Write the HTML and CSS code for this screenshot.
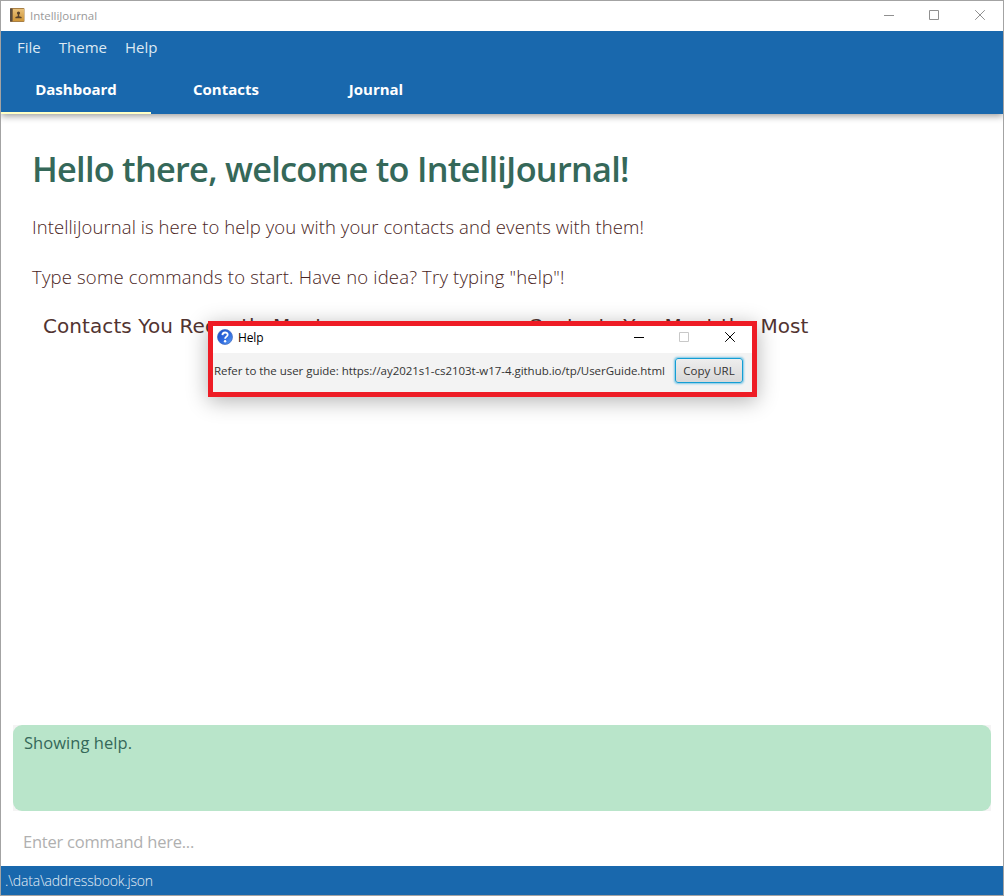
FILE: index.html
```html
<!DOCTYPE html>
<html lang="en">
<head>
<meta charset="utf-8">
<title>IntelliJournal</title>
<link rel="stylesheet" href="styles.css">
</head>
<body>
<div class="window">
  <header class="titlebar">
    <svg class="app-icon" width="15" height="15" viewBox="0 0 15 15">
      <defs><linearGradient id="book" x1="0" y1="0" x2="0" y2="1"><stop offset="0" stop-color="#e8c078"/><stop offset="1" stop-color="#cf9638"/></linearGradient></defs>
      <rect x="0" y="0" width="14.5" height="14" rx="1" fill="#a87f45"/>
      <rect x="0" y="0.5" width="2.4" height="13" fill="#5a4c3e"/>
      <rect x="3" y="1" width="11" height="12" fill="url(#book)"/>
      <circle cx="8.5" cy="5" r="1.6" fill="#56402a"/>
      <path d="M7.8 6h1.4v2.2l2.4.8v1.2H5.4V9l2.4-.8z" fill="#56402a"/>
    </svg>
    <span class="app-title">IntelliJournal</span>
    <div class="controls">
      <svg width="11" height="11" viewBox="0 0 11 11"><path d="M1 5.5h10"/></svg>
      <svg width="11" height="11" viewBox="0 0 11 11"><path d="M.5 .5h9v9h-9z"/></svg>
      <svg width="11" height="11" viewBox="0 0 11 11"><path d="M.2 .2l9.6 9.6M9.8 .2L.2 9.8"/></svg>
    </div>
  </header>
  <div class="topbar">
    <nav class="menu"><span>File</span><span>Theme</span><span>Help</span></nav>
    <nav class="tabs"><div class="tab active">Dashboard</div><div class="tab">Contacts</div><div class="tab">Journal</div></nav>
  </div>
  <main class="content">
    <h1>Hello there, welcome to IntelliJournal!</h1>
    <p class="intro">IntelliJournal is here to help you with your contacts and events with them!</p>
    <p class="hint">Type some commands to start. Have no idea? Try typing "help"!</p>
    <div class="columns"><h2>Contacts You Recently Meet</h2><h2>Contacts You Meet the Most</h2></div>
  </main>
  <div class="result-wrap"><div class="result">Showing help.</div></div>
  <div class="command">Enter command here...</div>
  <footer class="status">.\data\addressbook.json</footer>
</div>
<section class="dialog">
  <div class="dialog-title">
    <svg class="help-icon" width="16" height="16" viewBox="0 0 16 16">
      <defs><linearGradient id="ball" x1="0" y1="0" x2="1" y2="1"><stop offset="0" stop-color="#1c4fc4"/><stop offset=".55" stop-color="#2f6be0"/><stop offset="1" stop-color="#62a4f4"/></linearGradient></defs>
      <circle cx="8" cy="8" r="7.5" fill="url(#ball)" stroke="#3c66bd" stroke-width=".7"/>
      <path d="M5.4 6.1C5.5 2.7 10.7 2.7 10.7 5.8C10.7 7.7 8.1 7.6 8.1 9.8" fill="none" stroke="#fff" stroke-width="1.8"/>
      <circle cx="8.1" cy="12.3" r="1.2" fill="#fff"/>
    </svg>
    <span class="dialog-name">Help</span>
    <div class="dialog-controls">
      <svg width="11" height="11" viewBox="0 0 11 11"><path d="M1 5.5h10"/></svg>
      <svg class="disabled" width="11" height="11" viewBox="0 0 11 11"><path d="M.5 .5h9v9h-9z"/></svg>
      <svg width="11" height="11" viewBox="0 0 11 11"><path d="M.2 .2l9.6 9.6M9.8 .2L.2 9.8"/></svg>
    </div>
  </div>
  <div class="dialog-body"><span class="url">Refer to the user guide: https://ay2021s1-cs2103t-w17-4.github.io/tp/UserGuide.html</span><button class="copy">Copy URL</button></div>
</section>
</body>
</html>
```
FILE: styles.css
```css
* { box-sizing: border-box; }
body { margin: 0; width: 1004px; height: 896px; overflow: hidden; background: #fff; font-family: "Open Sans", "Noto Sans", sans-serif; }
.window { width: 1004px; height: 896px; border: 1px solid #a3a3a3; display: flex; flex-direction: column; }
.titlebar { height: 30px; flex: none; display: flex; align-items: center; padding: 0 17px 2px 9px; }
.app-icon { flex: none; margin-right: 5px; }
.app-title { font-size: 11.5px; letter-spacing: -.04px; color: #999; }
.controls { margin-left: auto; display: flex; gap: 35px; }
.controls path { fill: none; stroke: #909090; stroke-width: 1; }
.topbar { height: 83px; flex: none; background: #1968ad; box-shadow: 0 2px 7px rgba(0,0,0,.4); clip-path: inset(0 0 -14px 0); display: flex; flex-direction: column; }
.menu { height: 34px; display: flex; align-items: center; gap: 18px; padding: 0 0 2px 16px; font-size: 15px; color: #dde9f3; }
.tabs { height: 49px; display: flex; }
.tab { width: 150px; text-align: center; color: #fff; font-weight: 700; font-size: 15px; line-height: 49px; }
.tab.active { border-bottom: 2px solid #ffffc4; }
.content { flex: 1; padding: 0 31px; }
h1 { margin: 30px 0 0; font-size: 34.3px; letter-spacing: -.73px; line-height: 50px; font-weight: 600; color: #356859; white-space: nowrap; }
p { margin: 18px 0 0; font-size: 18.5px; line-height: 32px; font-weight: 300; color: #4a2523; white-space: nowrap; }
.intro { margin-top: 17px; letter-spacing: .07px; }
.hint { letter-spacing: .18px; }
.columns { display: grid; grid-template-columns: 485px 1fr; padding-left: 11px; margin-top: 17px; }
h2 { margin: 0; font: 400 20px/32px "DejaVu Sans", sans-serif; letter-spacing: .08px; color: #523431; white-space: nowrap; }
.result-wrap { margin: 0 12px; background: #f4f4f4; flex: none; }
.result { height: 86px; border-radius: 9px; background: #b9e5ca; color: #356859; padding: 6px 11px; font-size: 16.5px; letter-spacing: .05px; line-height: 24px; }
.command { height: 55px; flex: none; padding: 5px 22px 0; font-size: 16.5px; letter-spacing: -.23px; line-height: 52px; color: #b0b0b0; }
.status { height: 29px; flex: none; background: #1968ad; color: #e5eef6; padding-left: 4px; font-size: 14px; letter-spacing: -.18px; line-height: 30px; font-weight: 300; }
.dialog { position: absolute; left: 208px; top: 321px; width: 549px; height: 76px; border: 5px solid #ee1c25; background: #fff; box-shadow: 0 4px 20px rgba(0,0,0,.3); }
.dialog-title { height: 27px; display: flex; align-items: center; padding: 0 16px 5px 4px; }
.help-icon { margin-top: 0; }
.dialog-name { margin-left: 5px; font-size: 12px; letter-spacing: -.15px; color: #000; padding-top: 1px; }
.dialog-controls { margin-left: auto; display: flex; gap: 35px; padding-top: 1px; }
.dialog-controls path { fill: none; stroke: #000; stroke-width: 1; }
.dialog-controls .disabled path { stroke: #c8c8c8; }
.dialog-body { height: 39px; background: #f3f3f3; display: flex; align-items: center; justify-content: space-between; padding: 0 9px 4px 1px; white-space: nowrap; }
.url { font-size: 11.5px; letter-spacing: -.035px; color: #333; }
.copy { width: 68px; height: 25px; border: 1px solid #149ed4; border-radius: 3px; background: linear-gradient(#eee, #d8d8d8); box-shadow: 0 0 2px 1px #7cc6e6; font: 11.5px "Open Sans", sans-serif; color: #333; padding: 0; white-space: nowrap; }
```
